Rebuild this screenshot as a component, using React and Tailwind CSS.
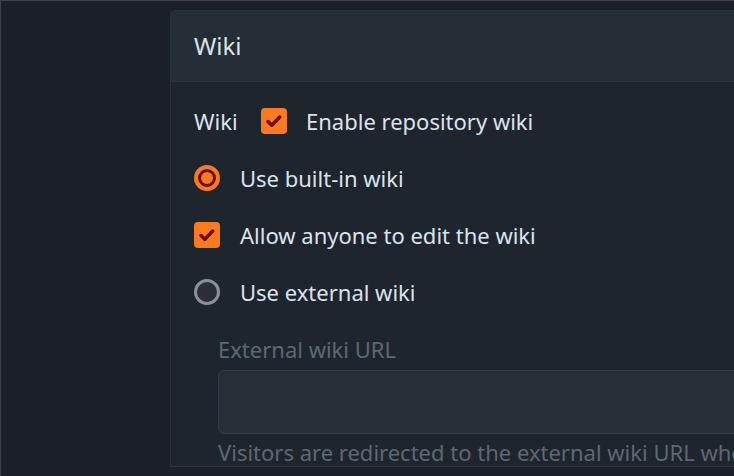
import React from 'react';

function CheckBox() {
  return (
    <span className="flex h-[26px] w-[26px] shrink-0 items-center justify-center rounded-[4px] bg-[#f97a1f]">
      <svg width="20" height="20" viewBox="0 0 16 16" fill="none">
        <path d="M3.2 8.4l3 3 6.4-6.6" stroke="#6e0e12" strokeWidth="2.8" strokeLinecap="round" strokeLinejoin="round" />
      </svg>
    </span>
  );
}

function Radio({ checked }) {
  if (checked) {
    return (
      <span className="flex h-[26px] w-[26px] shrink-0 items-center justify-center rounded-full bg-[#f97a1f]">
        <span className="h-[18px] w-[18px] rounded-full border-[3px] border-[#6e0e12] bg-[#f97a1f]" />
      </span>
    );
  }
  return <span className="h-[26px] w-[26px] shrink-0 rounded-full border-[3px] border-[#8b8f99] bg-[#2b2d37]" />;
}

export default function App() {
  return (
    <div
      className="h-[476px] w-[734px] overflow-hidden border-l border-t border-[#3b414b] bg-[#1b2028] pl-[169px] pt-[9px] text-[22px] text-[#dbe3ee]"
      style={{ fontFamily: '"Noto Sans", "Open Sans", sans-serif' }}
    >
      <div className="w-[640px] rounded-tl-[6px] border border-[#2c333d] bg-[#1e252d]">
        {/* header */}
        <div className="flex h-[71px] items-center border-b border-[#2c333d] bg-[#252d36] px-[23px]">
          <span className="text-[24px] text-[#dbe3ee]">Wiki</span>
        </div>

        <div className="px-[23px] pt-[12px]">
          <div className="flex h-[54px] items-center">
            <span className="w-[67px]">Wiki</span>
            <CheckBox />
            <span className="ml-[19px]">Enable repository wiki</span>
          </div>

          <div className="mt-[3px] flex h-[54px] items-center gap-[20px]">
            <Radio checked />
            <span>Use built-in wiki</span>
          </div>
          <div className="mt-[3px] flex h-[54px] items-center gap-[20px]">
            <CheckBox />
            <span>Allow anyone to edit the wiki</span>
          </div>
          <div className="mt-[3px] flex h-[54px] items-center gap-[20px]">
            <Radio />
            <span>Use external wiki</span>
          </div>

          <div className="ml-[24px] mt-[16px] text-[#5d6874]">
            <div className="leading-[28px]">External wiki URL</div>
            <div className="mt-[7px] h-[64px] rounded-[6px] border border-[#343c47] bg-[#262e38]" />
            <div className="mt-[4px] whitespace-nowrap leading-[28px]">
              Visitors are redirected to the external wiki URL when clicking the wiki tab.
            </div>
          </div>
        </div>
      </div>
    </div>
  );
}
